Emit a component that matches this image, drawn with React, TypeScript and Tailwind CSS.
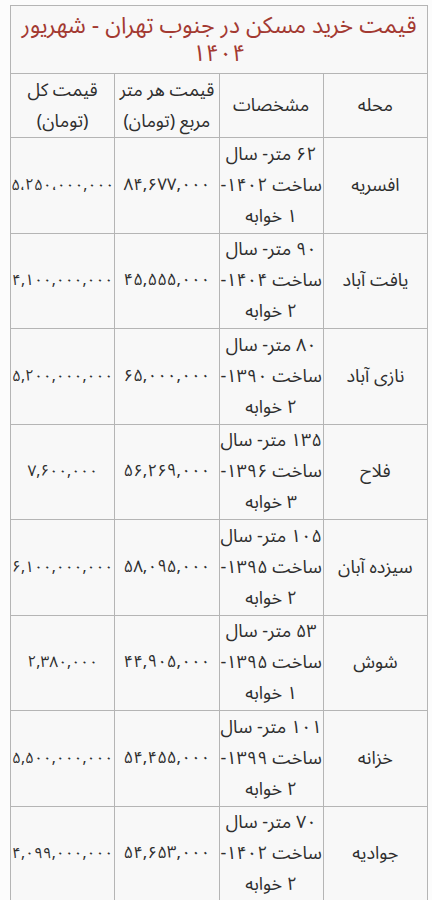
const rows = [
  { area: "افسریه", spec: ["۶۲ متر- سال", "ساخت ۱۴۰۲-", "۱ خوابه"], perMeter: "۸۴,۶۷۷,۰۰۰", total: "۵،۲۵۰،۰۰۰,۰۰۰" },
  { area: "یافت آباد", spec: ["۹۰ متر- سال", "ساخت ۱۴۰۴-", "۲ خوابه"], perMeter: "۴۵,۵۵۵,۰۰۰", total: "۴,۱۰۰,۰۰۰,۰۰۰" },
  { area: "نازی آباد", spec: ["۸۰ متر- سال", "ساخت ۱۳۹۰-", "۲ خوابه"], perMeter: "۶۵,۰۰۰,۰۰۰", total: "۵,۲۰۰,۰۰۰,۰۰۰" },
  { area: "فلاح", spec: ["۱۳۵ متر- سال", "ساخت ۱۳۹۶-", "۳ خوابه"], perMeter: "۵۶,۲۶۹,۰۰۰", total: "۷,۶۰۰,۰۰۰" },
  { area: "سیزده آبان", spec: ["۱۰۵ متر- سال", "ساخت ۱۳۹۵-", "۲ خوابه"], perMeter: "۵۸,۰۹۵,۰۰۰", total: "۶,۱۰۰,۰۰۰,۰۰۰" },
  { area: "شوش", spec: ["۵۳ متر- سال", "ساخت ۱۳۹۵-", "۱ خوابه"], perMeter: "۴۴,۹۰۵,۰۰۰", total: "۲,۳۸۰,۰۰۰" },
  { area: "خزانه", spec: ["۱۰۱ متر- سال", "ساخت ۱۳۹۹-", "۲ خوابه"], perMeter: "۵۴,۴۵۵,۰۰۰", total: "۵,۵۰۰,۰۰۰,۰۰۰" },
  { area: "جوادیه", spec: ["۷۰ متر- سال", "ساخت ۱۴۰۲-", "۲ خوابه"], perMeter: "۵۴,۶۵۳,۰۰۰", total: "۴,۰۹۹,۰۰۰,۰۰۰" },
];

const font = { fontFamily: '"Noto Sans Arabic", "Vazirmatn", "DejaVu Sans", sans-serif' };

const cell = "border border-[#b5b5b5] bg-[#f8f8f8] text-center align-middle p-0";

export default function App() {
  return (
    <div className="min-h-screen bg-[#fcfcfc] pt-[5px] pl-[10px]" style={font}>
      <table dir="rtl" className="w-[418px] table-fixed border-collapse text-[#2e2e2e]">
        <tbody>
          <tr className="h-[68px]">
            <td colSpan={4} className={`${cell} px-2 text-[23px] leading-[28px] text-[#a33a32]`}>
              قیمت خرید مسکن در جنوب تهران - شهریور ۱۴۰۴
            </td>
          </tr>
          <tr className="h-[64px] text-[18px] leading-[31px]">
            <td className={cell}>محله</td>
            <td className={cell}>مشخصات</td>
            <td className={cell}>
              قیمت هر متر
              <br />
              مربع (تومان)
            </td>
            <td className={cell}>
              قیمت کل
              <br />
              (تومان)
            </td>
          </tr>
          {rows.map((r) => (
            <tr key={r.area} className="h-[95.5px] text-[18px] leading-[31px]">
              <td className={cell}>{r.area}</td>
              <td className={cell}>
                {r.spec.map((s) => (
                  <div key={s}>{s}</div>
                ))}
              </td>
              <td className={`${cell} text-[17px]`}>{r.perMeter}</td>
              <td className={`${cell} whitespace-nowrap text-[15.5px] tracking-[-0.7px]`}>{r.total}</td>
            </tr>
          ))}
        </tbody>
      </table>
    </div>
  );
}
